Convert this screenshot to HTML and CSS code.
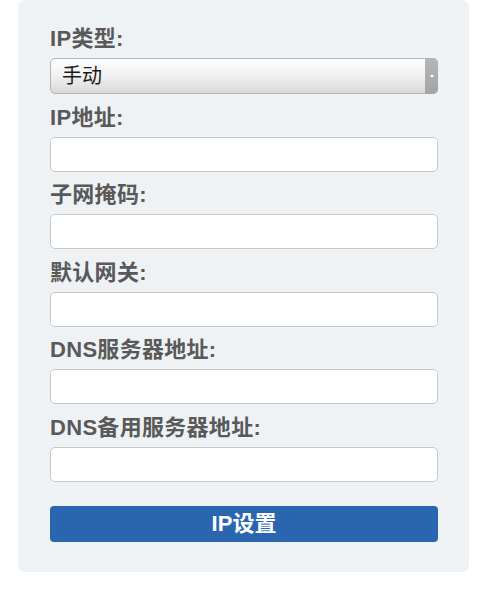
FILE: index.html
```html
<!DOCTYPE html>
<html lang="zh">
<head>
<meta charset="utf-8">
<title>IP设置</title>
<link rel="stylesheet" href="styles.css">
</head>
<body>
<form class="panel">
  <div class="field">
    <label class="label">IP类型:</label>
    <div class="select-wrap">
      <select class="select">
        <option>手动</option>
      </select>
      <span class="select-arrow"><span class="tri"></span></span>
    </div>
  </div>
  <div class="field">
    <label class="label">IP地址:</label>
    <input class="input" type="text">
  </div>
  <div class="field">
    <label class="label">子网掩码:</label>
    <input class="input" type="text">
  </div>
  <div class="field">
    <label class="label">默认网关:</label>
    <input class="input" type="text">
  </div>
  <div class="field">
    <label class="label">DNS服务器地址:</label>
    <input class="input" type="text">
  </div>
  <div class="field">
    <label class="label">DNS备用服务器地址:</label>
    <input class="input" type="text">
  </div>
  <button class="btn" type="button">IP设置</button>
</form>
</body>
</html>
```
FILE: styles.css
```css
* { box-sizing: border-box; }
html, body { margin: 0; padding: 0; background: #ffffff; }
body {
  font-family: "Liberation Sans", "Noto Sans CJK SC", sans-serif;
}
.panel {
  margin: 0 0 0 18px;
  width: 451px;
  background: #eef2f5;
  border-radius: 7px;
  padding: 26px 31px 30px 32px;
  display: flex;
  flex-direction: column;
}
.field {
  display: flex;
  flex-direction: column;
  margin-bottom: 10.5px;
}
.label {
  font-size: 22px;
  font-weight: bold;
  line-height: 26px;
  color: #595959;
  margin-bottom: 6px;
  letter-spacing: 0.3px;
}
.select-wrap {
  position: relative;
  height: 36px;
}
.select {
  appearance: none;
  -webkit-appearance: none;
  width: 100%;
  height: 36px;
  border: 1px solid #b4b4b4;
  border-radius: 5px;
  background: linear-gradient(#ffffff, #f2f2f2 45%, #d9d9d9);
  font-family: "Liberation Sans", "Noto Sans CJK SC", sans-serif;
  font-size: 20px;
  color: #1a1a1a;
  padding: 0 0 0 11px;
  margin: 0;
  outline: none;
}
.select-arrow {
  position: absolute;
  top: 0;
  right: 0;
  width: 13px;
  height: 36px;
  background: linear-gradient(#b6b6b6, #a4a4a4);
  border-radius: 0 5px 5px 0;
  display: flex;
  align-items: center;
  justify-content: center;
}
.tri {
  width: 0;
  height: 0;
  border-left: 2px solid transparent;
  border-right: 2px solid transparent;
  border-top: 3px solid #ffffff;
}
.input {
  height: 35px;
  width: 100%;
  border: 1px solid #c8c8c8;
  border-radius: 5px;
  background: #ffffff;
  margin: 0;
  padding: 0 8px;
  font-size: 18px;
  outline: none;
}
.btn {
  margin-top: 13.5px;
  height: 36px;
  width: 100%;
  border: none;
  border-radius: 4px;
  background: #2a66b0;
  color: #ffffff;
  font-family: "Liberation Sans", "Noto Sans CJK SC", sans-serif;
  font-size: 22px;
  font-weight: bold;
  line-height: 36px;
  padding: 0;
}
```
